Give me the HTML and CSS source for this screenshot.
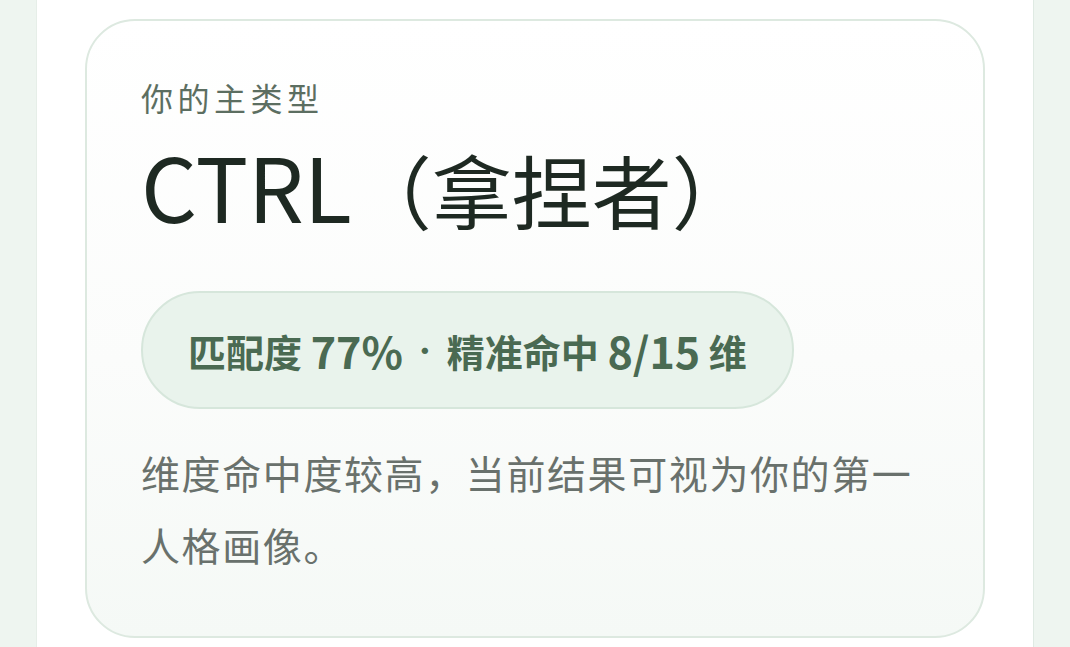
FILE: index.html
```html
<!DOCTYPE html>
<html lang="zh-CN">
<head>
<meta charset="utf-8">
<title>CTRL（拿捏者）</title>
<link rel="stylesheet" href="styles.css">
</head>
<body>
<div class="panel">
  <section class="card">
    <div class="label">你的主类型</div>
    <h1 class="title"><span class="latin">CTRL</span>（拿捏者）</h1>
    <div class="pill">匹配度 <span class="num">77%</span><span class="dot">·</span>精准命中 <span class="num">8/15</span> 维</div>
    <p class="desc">维度命中度较高，当前结果可视为你的第一人格画像。</p>
  </section>
</div>
</body>
</html>
```
FILE: styles.css
```css
html, body {
  margin: 0;
  padding: 0;
}
body {
  background: #eef5f0;
  font-family: "Noto Sans CJK SC", "Noto Sans", sans-serif;
  height: 647px;
  overflow: hidden;
}
.panel {
  margin: 0 36px 0 36px;
  background: #ffffff;
  border-left: 1px solid #e6eee8;
  border-right: 1px solid #dfeae3;
  padding-top: 19px;
  height: 647px;
  box-sizing: border-box;
}
.card {
  margin-left: 48px;
  width: 900px;
  height: 619px;
  box-sizing: border-box;
  border: 2px solid #dde9e0;
  border-radius: 50px;
  background: linear-gradient(180deg, #ffffff 0%, #fbfcfb 55%, #f5f9f6 100%);
  padding: 56px 56px 0 54px;
}
.label {
  font-size: 32px;
  line-height: 40px;
  letter-spacing: 4.5px;
  color: #5c6e61;
}
.title {
  margin: 18px 0 0 0;
  font-size: 80px;
  line-height: 100px;
  font-weight: 400;
  color: #1e2922;
  white-space: nowrap;
}
.title .latin {
  font-size: 88px;
}
.pill {
  margin-top: 53px;
  display: inline-flex;
  align-items: center;
  white-space: pre;
  height: 118px;
  box-sizing: border-box;
  padding: 0 45px 0 45px;
  border: 2px solid #d6e6db;
  border-radius: 59px;
  background: #e9f3ec;
  color: #4a6a52;
  font-size: 38px;
  font-weight: 700;
}
.pill .num {
  font-size: 43px;
}
.pill .dot {
  display: inline-block;
  width: 44px;
  text-align: center;
  font-family: "Inter", "Noto Sans", sans-serif;
}
.desc {
  margin: 27px 0 0 0;
  font-size: 39px;
  line-height: 72px;
  letter-spacing: 1.6px;
  color: #69716c;
}
```
